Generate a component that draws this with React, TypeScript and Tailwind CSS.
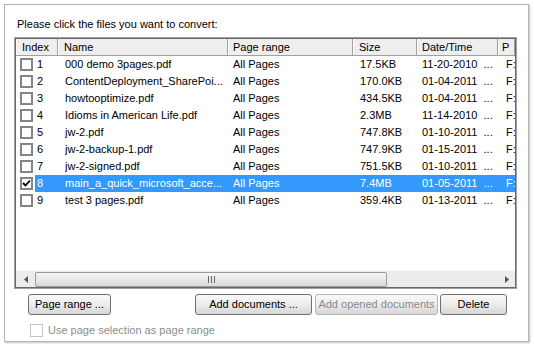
import React from "react";

const rows = [
  { i: "1", name: "000 demo 3pages.pdf", size: "17.5KB", date: "11-20-2010" },
  { i: "2", name: "ContentDeployment_SharePoi...", size: "170.0KB", date: "01-04-2011" },
  { i: "3", name: "howtooptimize.pdf", size: "434.5KB", date: "01-04-2011" },
  { i: "4", name: "Idioms in American Life.pdf", size: "2.3MB", date: "11-14-2010" },
  { i: "5", name: "jw-2.pdf", size: "747.8KB", date: "01-10-2011" },
  { i: "6", name: "jw-2-backup-1.pdf", size: "747.9KB", date: "01-15-2011" },
  { i: "7", name: "jw-2-signed.pdf", size: "751.5KB", date: "01-10-2011" },
  { i: "8", name: "main_a_quick_microsoft_acce...", size: "7.4MB", date: "01-05-2011", sel: true },
  { i: "9", name: "test 3 pages.pdf", size: "359.4KB", date: "01-13-2011" },
];

function Check({ checked, disabled }: { checked?: boolean; disabled?: boolean }) {
  return (
    <div
      className={
        "w-[13px] h-[13px] shrink-0 bg-white flex items-center justify-center " +
        (disabled ? "border border-[#c4c4c4] bg-[#f4f4f4]" : "border-2 border-[#858585]")
      }
    >
      {checked && (
        <svg width="9" height="9" viewBox="0 0 9 9">
          <path d="M1 4 L3.5 6.5 L8 1.5" stroke="#000" strokeWidth="1.8" fill="none" />
        </svg>
      )}
    </div>
  );
}

function HeaderCell({ w, label, pl }: { w: string; label: string; pl: string }) {
  return (
    <div className={`${w} ${pl} shrink-0 h-full flex items-center border-r border-[#a0a0a0] shadow-[inset_1px_0_0_#ffffff] overflow-hidden whitespace-nowrap`}>
      {label}
    </div>
  );
}

function Btn({ w, label, disabled }: { w: string; label: string; disabled?: boolean }) {
  return (
    <div
      className={
        `${w} h-[21px] rounded-[3px] flex items-center justify-center border bg-gradient-to-b from-[#f8f8f8] via-[#ececec] to-[#d6d6d6] ` +
        (disabled ? "border-[#b5b5b5] text-[#8a8a8a]" : "border-[#707070] text-black")
      }
    >
      {label}
    </div>
  );
}

export default function App() {
  return (
    <div
      className="w-[534px] h-[348px] bg-white relative overflow-hidden text-[11px] text-black"
      style={{ fontFamily: '"Liberation Sans", Arial, sans-serif' }}
    >
      <div className="absolute left-[4px] top-[4px] w-[525px] h-[338px] border border-[#b4b4b4] shadow-[1px_1px_2px_rgba(0,0,0,0.25)] bg-white pt-[11px] pl-[9px] flex flex-col">
        <div className="h-[21px] pl-[3px] leading-[14px] pt-[1px]">Please click the files you want to convert:</div>
        <div className="w-[503px] h-[252px] border border-[#a0a0a0] flex flex-col">
          <div className="flex-1 border border-[#696969] flex flex-col bg-white overflow-hidden">
            {/* header */}
            <div className="h-[17px] flex bg-[#eeeeee] border-b border-[#a0a0a0] shrink-0">
              <HeaderCell w="w-[42px]" pl="pl-[6px]" label="Index" />
              <HeaderCell w="w-[170px]" pl="pl-[6px]" label="Name" />
              <HeaderCell w="w-[125px]" pl="pl-[5px]" label="Page range" />
              <HeaderCell w="w-[64px]" pl="pl-[6px]" label="Size" />
              <HeaderCell w="w-[81px]" pl="pl-[5px]" label="Date/Time" />
              <HeaderCell w="w-[17px]" pl="pl-[4px]" label="P" />
            </div>
            {/* rows */}
            {rows.map((r) => (
              <div key={r.i} className="h-[17px] flex items-center shrink-0 whitespace-nowrap">
                <div className="w-[19px] pl-[4px] flex items-center shrink-0">
                  <Check checked={r.sel} />
                </div>
                <div className={"flex-1 h-full flex items-center " + (r.sel ? "bg-[#3399ff] text-white" : "")}>
                  <div className="w-[30px] pl-[2px] shrink-0">{r.i}</div>
                  <div className="w-[168px] shrink-0 overflow-hidden">{r.name}</div>
                  <div className="w-[127px] shrink-0">All Pages</div>
                  <div className="w-[62px] shrink-0">{r.size}</div>
                  <div className="w-[84px] shrink-0">
                    {r.date}&nbsp;&nbsp;...
                  </div>
                  <div className="w-[9px] shrink-0">F:</div>
                </div>
              </div>
            ))}
            <div className="flex-1" />
            {/* horizontal scrollbar */}
            <div className="h-[17px] shrink-0 flex items-center bg-[#ececec] border-t border-[#f8f8f8]">
              <div className="w-[19px] h-full flex items-center justify-center">
                <svg width="4" height="7" viewBox="0 0 4 7">
                  <path d="M4 0 L0 3.5 L4 7 Z" fill="#555" />
                </svg>
              </div>
              <div className="w-[352px] h-[15px] rounded-[2px] border border-[#9a9a9a] bg-gradient-to-b from-[#f6f6f6] to-[#dadada] flex items-center justify-center">
                <svg width="7" height="7" viewBox="0 0 7 7">
                  <rect x="0" y="0" width="1" height="7" fill="#666" />
                  <rect x="3" y="0" width="1" height="7" fill="#666" />
                  <rect x="6" y="0" width="1" height="7" fill="#666" />
                </svg>
              </div>
              <div className="flex-1" />
              <div className="w-[17px] h-full flex items-center justify-center">
                <svg width="4" height="7" viewBox="0 0 4 7">
                  <path d="M0 0 L4 3.5 L0 7 Z" fill="#555" />
                </svg>
              </div>
            </div>
          </div>
        </div>
        {/* buttons */}
        <div className="flex mt-[5px] items-center">
          <div className="ml-[14px]">
            <Btn w="w-[83px]" label="Page range ..." />
          </div>
          <div className="ml-[84px]">
            <Btn w="w-[117px]" label="Add documents ..." />
          </div>
          <div className="ml-[3px]">
            <Btn w="w-[123px]" label="Add opened documents" disabled />
          </div>
          <div className="ml-[2px]">
            <Btn w="w-[67px]" label="Delete" />
          </div>
        </div>
        <div className="flex items-center mt-[7px] ml-[16px] text-[#8d8d8d]">
          <Check disabled />
          <span className="ml-[5px]">Use page selection as page range</span>
        </div>
      </div>
    </div>
  );
}
